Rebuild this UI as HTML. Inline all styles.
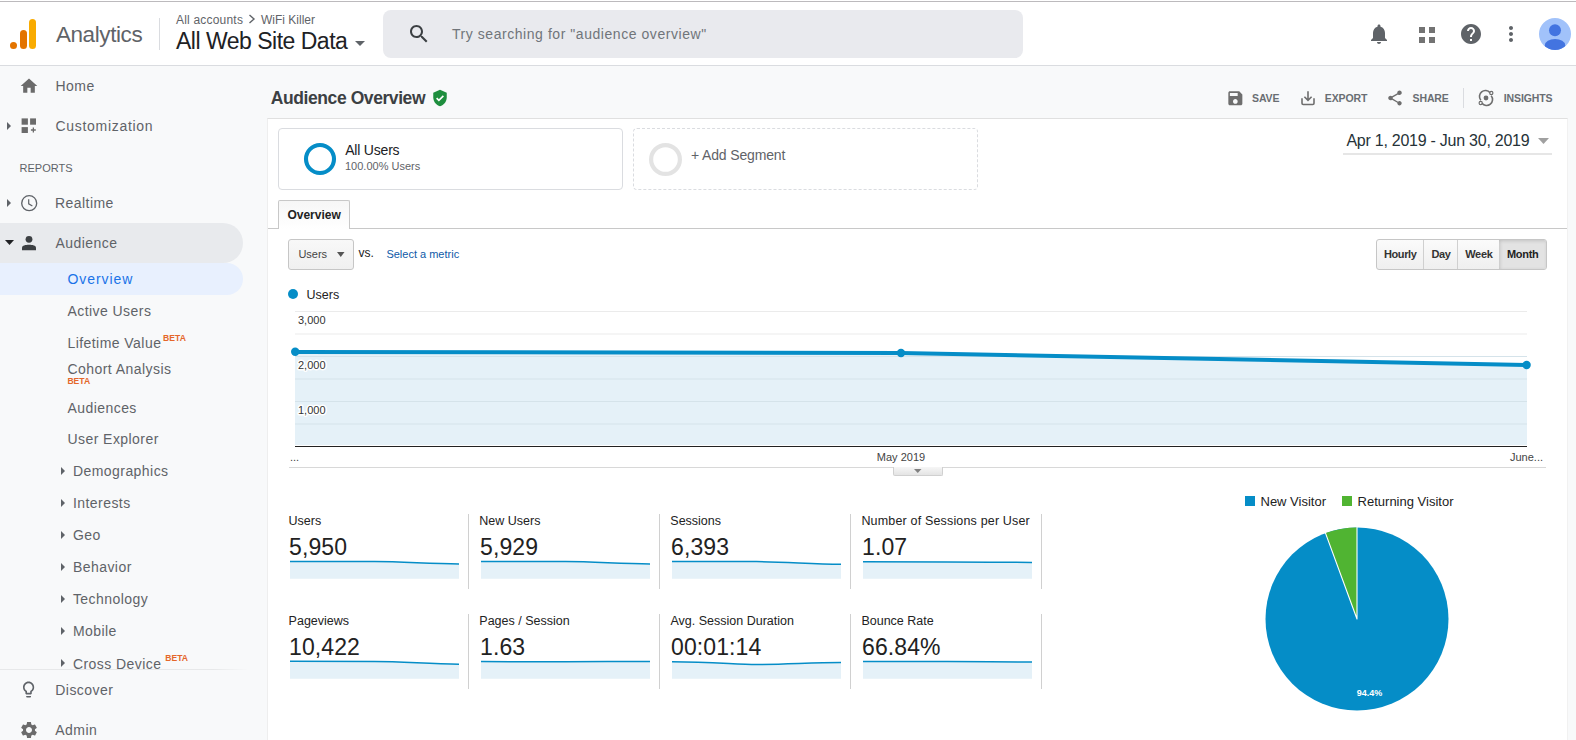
<!DOCTYPE html>
<html><head><meta charset="utf-8">
<style>
*{margin:0;padding:0;box-sizing:border-box}
html,body{width:1576px;height:740px;overflow:hidden;background:#f8f9fa;font-family:"Liberation Sans",sans-serif;position:relative}
.a{position:absolute}
.t{position:absolute;white-space:nowrap;line-height:1}
svg{position:absolute;overflow:visible}
.nav{font-size:14px;color:#5f6368;letter-spacing:.45px}
.ic{fill:#6b6b6b}
.beta{font-size:8.6px;font-weight:700;color:#e5672a;letter-spacing:0}
.tri-r{position:absolute;width:0;height:0;border-top:4px solid transparent;border-bottom:4px solid transparent;border-left:4.5px solid #5f6368}
.act{font-size:10.5px;font-weight:700;color:#6a6e73;letter-spacing:-.1px}
.lbl{font-size:12.5px;color:#222}
.val{font-size:23px;color:#222;letter-spacing:.1px}
.vdiv{position:absolute;width:1px;background:#d0d0d0}
</style></head><body>
<!-- HEADER -->
<div class="a" style="left:0;top:0;width:1576px;height:66px;background:#fff;border-bottom:1px solid #dadce0"></div>
<div class="a" style="left:0;top:1px;width:1576px;height:1px;background:#bcbabd"></div>
<!-- logo -->
<div class="a" style="left:10.3px;top:41.5px;width:7.1px;height:7.2px;border-radius:50%;background:#e37400"></div>
<div class="a" style="left:19.5px;top:30.2px;width:7.1px;height:18.5px;border-radius:3.55px;background:#e37400"></div>
<div class="a" style="left:28.8px;top:19.1px;width:7.0px;height:29.6px;border-radius:3.5px;background:#f9ab00"></div>
<div class="t" style="left:55.9px;top:23.8px;font-size:22.5px;color:#5f6368;letter-spacing:-.4px">Analytics</div>
<div class="a" style="left:159px;top:18px;width:1px;height:32px;background:#dadce0"></div>
<div class="t" style="left:176px;top:13.8px;font-size:12px;color:#5f6368;letter-spacing:.2px">All accounts</div>
<svg style="left:248px;top:14px" width="8" height="10" viewBox="0 0 8 10"><path d="M1.5 1 L6 5 L1.5 9" fill="none" stroke="#5f6368" stroke-width="1.4"/></svg>
<div class="t" style="left:261px;top:13.8px;font-size:12px;color:#5f6368">WiFi Killer</div>
<div class="t" style="left:176px;top:30.2px;font-size:23px;color:#202124;letter-spacing:-.5px">All Web Site Data</div>
<svg style="left:355px;top:40.5px" width="10" height="5" viewBox="0 0 10 5"><path d="M0 0 L10 0 L5 5z" fill="#5f6368"/></svg>
<!-- search -->
<div class="a" style="left:383px;top:10px;width:640px;height:48px;border-radius:8px;background:#e9eaee"></div>
<svg style="left:407px;top:21.9px" width="24" height="24" viewBox="0 0 24 24"><path fill="#3c4043" d="M15.5 14h-.79l-.28-.27C15.41 12.59 16 11.11 16 9.5 16 5.910 13.09 3 9.5 3S3 5.91 3 9.5 5.91 16 9.5 16c1.61 0 3.09-.59 4.23-1.57l.27.28v.79l5 4.99L20.49 19l-4.99-5zm-6 0C7.01 14 5 11.99 5 9.5S7.01 5 9.5 5 14 7.01 14 9.5 11.99 14 9.5 14z"/></svg>
<div class="t" style="left:452px;top:27px;font-size:14px;color:#70757a;letter-spacing:.55px">Try searching for "audience overview"</div>
<!-- right icons -->
<svg style="left:1366.7px;top:21.9px" width="24" height="24" viewBox="0 0 24 24"><path fill="#5f6368" d="M12 22c1.1 0 2-.9 2-2h-4c0 1.1.89 2 2 2zm6-6v-5c0-3.07-1.64-5.64-4.5-6.32V4c0-.83-.67-1.5-1.5-1.5s-1.5.67-1.5 1.5v.68C7.63 5.36 6 7.92 6 11v5l-2 2v1h16v-1l-2-2z"/></svg>
<div class="a" style="left:1419px;top:27px;width:6px;height:6px;background:#737373"></div>
<div class="a" style="left:1429px;top:27px;width:6px;height:6px;background:#737373"></div>
<div class="a" style="left:1419px;top:37px;width:6px;height:6px;background:#737373"></div>
<div class="a" style="left:1429px;top:37px;width:6px;height:6px;background:#737373"></div>
<svg style="left:1459px;top:22px" width="24" height="24" viewBox="0 0 24 24"><path fill="#5f6368" d="M12 2C6.48 2 2 6.48 2 12s4.48 10 10 10 10-4.48 10-10S17.52 2 12 2zm1 17h-2v-2h2v2zm2.07-7.75l-.9.92C13.45 12.9 13 13.5 13 15h-2v-.5c0-1.1.45-2.1 1.170-2.83l1.24-1.26c.37-.36.59-.86.59-1.41 0-1.1-.9-2-2-2s-2 .9-2 2H8c0-2.21 1.79-4 4-4s4 1.79 4 4c0 .88-.36 1.68-.93 2.25z"/></svg>
<svg style="left:1499px;top:22px" width="24" height="24" viewBox="0 0 24 24"><path fill="#5f6368" d="M12 8c1.1 0 2-.9 2-2s-.9-2-2-2-2 .9-2 2 .9 2 2 2zm0 2c-1.1 0-2 .9-2 2s.9 2 2 2 2-.9 2-2-.9-2-2-2zm0 6c-1.1 0-2 .9-2 2s.9 2 2 2 2-.9 2-2-.9-2-2-2z"/></svg>
<svg style="left:1539px;top:17.8px" width="32" height="32" viewBox="0 0 32 32"><defs><clipPath id="av"><circle cx="16" cy="16" r="16"/></clipPath></defs><circle cx="16" cy="16" r="16" fill="#a1c2fa"/><g clip-path="url(#av)"><circle cx="16" cy="12.2" r="6" fill="#4374e0"/><rect x="5.9" y="21" width="20.3" height="14" rx="10.15" ry="6.2" fill="#4374e0"/></g></svg>

<!-- SIDEBAR -->
<svg style="left:19px;top:76.1px" width="20" height="20" viewBox="0 0 24 24"><path fill="#6b6b6b" d="M10 20v-6h4v6h5v-8h3L12 3 2 12h3v8z"/></svg>
<div class="t nav" style="left:55.5px;top:78.8px">Home</div>
<div class="tri-r" style="left:7px;top:122px"></div>
<svg style="left:21px;top:118px" width="16" height="16" viewBox="0 0 16 16"><rect x="0.6" y="0.4" width="6.3" height="6.3" fill="#6b6b6b"/><rect x="9.1" y="0.4" width="5.9" height="6.3" fill="#6b6b6b"/><rect x="0.6" y="9.1" width="6.3" height="5.9" fill="#6b6b6b"/><path d="M12.35 9.6v5M9.9 12h4.9" stroke="#6b6b6b" stroke-width="1.3"/></svg>
<div class="t nav" style="left:55.5px;top:119.3px;letter-spacing:.7px">Customization</div>
<div class="t" style="left:19.4px;top:162.9px;font-size:11px;color:#5f6368;letter-spacing:.05px">REPORTS</div>
<div class="tri-r" style="left:7px;top:199px"></div>
<svg style="left:21px;top:194.8px" width="16.4" height="16.4" viewBox="0 0 16.4 16.4"><circle cx="8.2" cy="8.2" r="7.5" fill="none" stroke="#5f6368" stroke-width="1.35"/><path d="M7.7 4.2v4.6l3.7 2.2" fill="none" stroke="#5f6368" stroke-width="1.2"/></svg>
<div class="t nav" style="left:55px;top:196.3px">Realtime</div>
<div class="a" style="left:0;top:223px;width:243px;height:40px;background:#e8eaed;border-radius:0 20px 20px 0"></div>
<svg style="left:4.8px;top:240.4px" width="9" height="5" viewBox="0 0 9 5"><path d="M0 0h9L4.5 5z" fill="#202124"/></svg>
<svg style="left:0;top:0" width="60" height="260"><circle cx="29" cy="239.3" r="3.4" fill="#3c4043"/><path d="M22 250.3V247.8C22 245.6 25.5 244.8 29 244.8S36 245.6 36 247.8V250.3Z" fill="#3c4043"/></svg>
<div class="t nav" style="left:55.5px;top:236.1px">Audience</div>
<div class="a" style="left:0;top:263px;width:243px;height:32px;background:#e8f0fe;border-radius:0 16px 16px 0"></div>
<div class="t nav" style="left:67.4px;top:272.1px;color:#1a73e8;letter-spacing:.95px">Overview</div>
<div class="t nav" style="left:67.4px;top:303.9px">Active Users</div>
<div class="t nav" style="left:67.4px;top:335.5px">Lifetime Value</div>
<div class="t beta" style="left:163.1px;top:334.2px">BETA</div>
<div class="t nav" style="left:67.4px;top:361.7px">Cohort Analysis</div>
<div class="t beta" style="left:67.4px;top:377.2px">BETA</div>
<div class="t nav" style="left:67.4px;top:400.5px">Audiences</div>
<div class="t nav" style="left:67.4px;top:431.7px">User Explorer</div>
<div class="tri-r" style="left:60.7px;top:467px"></div>
<div class="t nav" style="left:72.9px;top:464.3px">Demographics</div>
<div class="tri-r" style="left:60.7px;top:499px"></div>
<div class="t nav" style="left:72.9px;top:495.9px">Interests</div>
<div class="tri-r" style="left:60.7px;top:531px"></div>
<div class="t nav" style="left:72.9px;top:527.8px">Geo</div>
<div class="tri-r" style="left:60.7px;top:563px"></div>
<div class="t nav" style="left:72.9px;top:559.9px">Behavior</div>
<div class="tri-r" style="left:60.7px;top:595px"></div>
<div class="t nav" style="left:72.9px;top:592.0px">Technology</div>
<div class="tri-r" style="left:60.7px;top:627px"></div>
<div class="t nav" style="left:72.9px;top:623.6px">Mobile</div>
<div class="tri-r" style="left:60.7px;top:659px"></div>
<div class="t nav" style="left:72.9px;top:656.5px">Cross Device</div>
<div class="t beta" style="left:165.3px;top:654.3px">BETA</div>
<div class="a" style="left:0;top:668.5px;width:267px;height:72px;background:#f8f9fa"></div>
<div class="a" style="left:0;top:668.5px;width:267px;height:1.5px;background:linear-gradient(to right,rgba(60,64,67,.09),rgba(60,64,67,.09) 80%,rgba(60,64,67,0) 93%)"></div>
<svg style="left:19.4px;top:680.2px" width="19.2" height="19.2" viewBox="0 0 24 24"><path fill="#5f6368" d="M9 21c0 .55.45 1 1 1h4c.55 0 1-.45 1-1v-1H9v1zm3-19C8.14 2 5 5.14 5 9c0 2.38 1.19 4.47 3 5.74V17c0 .55.45 1 1 1h6c.55 0 1-.45 1-1v-2.26c1.81-1.27 3-3.36 3-5.74 0-3.86-3.14-7-7-7zm2.85 11.1l-.85.6V16h-4v-2.3l-.85-.6C7.8 12.16 7 10.63 7 9c0-2.76 2.24-5 5-5s5 2.24 5 5c0 1.63-.8 3.16-2.15 4.1z"/></svg>
<div class="t nav" style="left:55.3px;top:683.3px">Discover</div>
<svg style="left:18.9px;top:720px" width="20" height="20" viewBox="0 0 24 24"><path fill="#6b6b6b" d="M19.14 12.94c.04-.3.06-.61.06-.94 0-.32-.02-.64-.07-.94l2.03-1.58c.18-.14.23-.41.12-.61l-1.92-3.32c-.12-.22-.37-.29-.59-.22l-2.39.96c-.5-.38-1.03-.7-1.62-.94l-.36-2.54c-.04-.24-.24-.41-.48-.41h-3.84c-.24 0-.43.17-.47.41l-.36 2.54c-.59.24-1.13.57-1.62.94l-2.39-.96c-.22-.08-.47 0-.59.22L2.74 8.87c-.12.21-.08.47.12.61l2.03 1.58c-.05.3-.09.63-.09.94s.02.64.07.94l-2.03 1.58c-.18.14-.23.41-.12.61l1.92 3.32c.12.22.37.29.59.22l2.39-.96c.5.38 1.03.7 1.62.94l.36 2.54c.05.24.24.41.48.41h3.84c.24 0 .44-.17.47-.41l.36-2.54c.59-.24 1.13-.56 1.62-.94l2.39.96c.22.08.47 0 .59-.22l1.92-3.32c.12-.22.07-.47-.12-.61l-2.01-1.58zM12 15.6c-1.98 0-3.6-1.62-3.6-3.6s1.62-3.6 3.6-3.6 3.6 1.62 3.6 3.6-1.62 3.6-3.6 3.6z"/></svg>
<div class="t nav" style="left:55.3px;top:723.1px">Admin</div>

<!-- MAIN -->
<div class="t" style="left:270.8px;top:90.3px;font-size:17.5px;font-weight:700;color:#3c4043;letter-spacing:-.42px">Audience Overview</div>
<svg style="left:431px;top:88.5px" width="18" height="18" viewBox="0 0 24 24"><path fill="#1e8e3e" d="M12 1L3 5v6c0 5.55 3.84 10.74 9 12 5.16-1.26 9-6.45 9-12V5l-9-4z"/><path d="M7.5 12.2l3 3 6-6" fill="none" stroke="#fff" stroke-width="2.2"/></svg>
<!-- actions -->
<svg style="left:1225.7px;top:88.7px" width="18.7" height="18.7" viewBox="0 0 24 24"><path fill="#6e6e6e" d="M17 3H5c-1.11 0-2 .9-2 2v14c0 1.1.89 2 2 2h14c1.1 0 2-.9 2-2V7l-4-4zm-5 16c-1.66 0-3-1.34-3-3s1.34-3 3-3 3 1.34 3 3-1.34 3-3 3zm3-10H5V5h10v4z"/></svg>
<div class="t act" style="left:1252px;top:92.8px">SAVE</div>
<svg style="left:1300px;top:90px" width="16" height="16" viewBox="0 0 16 16"><path d="M8 1.2v9M4.4 6.7L8 10.3l3.6-3.6M2 8.2v5.1q0 1.2 1.2 1.2h9.6q1.2 0 1.2-1.2V8.2" fill="none" stroke="#6e6e6e" stroke-width="1.6"/></svg>
<div class="t act" style="left:1324.8px;top:92.8px">EXPORT</div>
<svg style="left:1386px;top:89px" width="18" height="18" viewBox="0 0 24 24"><path fill="#6e6e6e" d="M18 16.08c-.76 0-1.44.3-1.96.77L8.91 12.7c.05-.23.09-.46.09-.7s-.04-.47-.09-.7l7.05-4.11c.54.5 1.25.81 2.04.81 1.66 0 3-1.34 3-3s-1.34-3-3-3-3 1.34-3 3c0 .24.04.47.09.7L8.04 9.81C7.5 9.31 6.79 9 6 9c-1.66 0-3 1.34-3 3s1.34 3 3 3c.79 0 1.5-.31 2.04-.81l7.12 4.16c-.05.21-.08.43-.08.65 0 1.61 1.31 2.92 2.92 2.92 1.61 0 2.92-1.31 2.92-2.92s-1.31-2.92-2.92-2.92z"/></svg>
<div class="t act" style="left:1412.5px;top:92.8px">SHARE</div>
<div class="a" style="left:1463px;top:88px;width:1px;height:20px;background:#dadce0"></div>
<svg style="left:1478px;top:90px" width="16" height="16" viewBox="0 0 16 16"><circle cx="8" cy="8" r="2.4" fill="#6e6e6e"/><path d="M13.2 5.8A5.8 5.8 0 0 1 4 13.3M2.8 10.2A5.8 5.8 0 0 1 12 2.7" fill="none" stroke="#6e6e6e" stroke-width="1.6"/><circle cx="13.3" cy="3" r="1.6" fill="none" stroke="#6e6e6e" stroke-width="1.2"/><circle cx="2.7" cy="13" r="1.6" fill="none" stroke="#6e6e6e" stroke-width="1.2"/></svg>
<div class="t act" style="left:1503.7px;top:92.8px">INSIGHTS</div>

<!-- panel -->
<div class="a" style="left:267px;top:118px;width:1301px;height:622px;background:#fff;border-top:1px solid #e0e0e0;border-left:1px solid #eeeeee;border-right:1px solid #f1f1f1"></div>
<!-- segments -->
<div class="a" style="left:278px;top:128px;width:345px;height:62px;border:1px solid #dadce0;border-radius:4px"></div>
<svg style="left:303px;top:142.7px" width="33" height="33" viewBox="0 0 33 33"><circle cx="17" cy="16" r="14" fill="none" stroke="#058dc7" stroke-width="4.1"/></svg>
<div class="t" style="left:345.2px;top:143.1px;font-size:14px;color:#202124;letter-spacing:-.2px">All Users</div>
<div class="t" style="left:345px;top:161px;font-size:11px;color:#5f6368">100.00% Users</div>
<div class="a" style="left:633px;top:128px;width:345px;height:62px;border:1px dashed #dadce0;border-radius:4px"></div>
<svg style="left:649.3px;top:142.5px" width="33" height="33" viewBox="0 0 33 33"><circle cx="16.5" cy="16.5" r="14.4" fill="none" stroke="#e3e3e3" stroke-width="4.2"/></svg>
<div class="t" style="left:691px;top:148.3px;font-size:14px;color:#5f6368;letter-spacing:-.15px">+ Add Segment</div>
<!-- date -->
<div class="t" style="left:1346.4px;top:133.3px;font-size:16px;color:#263238;letter-spacing:-.25px">Apr 1, 2019 - Jun 30, 2019</div>
<svg style="left:1538.3px;top:138px" width="11" height="6" viewBox="0 0 11 6"><path d="M0 0h11L5.5 6z" fill="#a0a0a0"/></svg>
<div class="a" style="left:1343px;top:153px;width:209px;height:2px;background:#e6e6e6"></div>
<!-- tab -->
<div class="a" style="left:268px;top:228px;width:1299px;height:1px;background:#c8c8c8"></div>
<div class="a" style="left:278px;top:200px;width:72px;height:29px;border:1px solid #c8c8c8;border-bottom:none;border-radius:2px 2px 0 0;background:linear-gradient(#f6f6f6,#fff)"></div>
<div class="t" style="left:287.4px;top:209px;font-size:12px;font-weight:700;color:#222">Overview</div>
<!-- chart controls -->
<div class="a" style="left:288px;top:239px;width:66px;height:31px;border:1px solid #c6c6c6;border-radius:3px;background:linear-gradient(#f8f8f8,#f0f0f0)"></div>
<div class="t" style="left:298.4px;top:248.5px;font-size:11px;color:#444">Users</div>
<svg style="left:336.8px;top:251.6px" width="7.5" height="5" viewBox="0 0 7.5 5"><path d="M0 0h7.5L3.75 5z" fill="#555"/></svg>
<div class="t" style="left:358.4px;top:247px;font-size:12px;color:#222">vs.</div>
<div class="t" style="left:386.4px;top:248.5px;font-size:11px;color:#0f5aa8">Select a metric</div>
<!-- hourly buttons -->
<div class="a" style="left:1376px;top:239px;width:171px;height:31px;border:1px solid #c6c6c6;border-radius:3px;background:linear-gradient(#fbfbfb,#efefef);overflow:hidden">
  <div class="a" style="left:122.4px;top:0;width:49px;height:31px;background:#e3e3e3;box-shadow:inset 0 0 4px rgba(0,0,0,.22)"></div>
  <div class="a" style="left:46.3px;top:0;width:1px;height:31px;background:#d0d0d0"></div>
  <div class="a" style="left:80px;top:0;width:1px;height:31px;background:#d0d0d0"></div>
</div>
<div class="t" style="left:1384px;top:248.6px;font-size:11px;font-weight:700;color:#333;letter-spacing:-.4px">Hourly</div>
<div class="t" style="left:1431.4px;top:248.6px;font-size:11px;font-weight:700;color:#333;letter-spacing:-.3px">Day</div>
<div class="t" style="left:1465.2px;top:248.6px;font-size:11px;font-weight:700;color:#333;letter-spacing:-.3px">Week</div>
<div class="t" style="left:1507px;top:248.6px;font-size:11px;font-weight:700;color:#222;letter-spacing:-.3px">Month</div>
<!-- legend -->
<div class="a" style="left:288px;top:289px;width:10px;height:10px;border-radius:50%;background:#058dc7"></div>
<div class="t" style="left:306.5px;top:288.8px;font-size:12.5px;color:#222">Users</div>
<!-- chart -->
<svg style="left:0;top:0" width="1576" height="740">
  <g stroke="#ebebeb" stroke-width="1">
    <line x1="295" y1="311.5" x2="1527" y2="311.5"/>
    <line x1="295" y1="334" x2="1527" y2="334"/>
  </g>
  <path d="M295 352 L901 353 L1526.6 365 L1527 365 L1527 445 L295 445z" fill="#e5f1f8"/>
  <g stroke="#d5e3ea" stroke-width="1">
    <line x1="295" y1="356.5" x2="1527" y2="356.5"/>
    <line x1="295" y1="379" x2="1527" y2="379"/>
    <line x1="295" y1="401.5" x2="1527" y2="401.5"/>
    <line x1="295" y1="424" x2="1527" y2="424"/>
  </g>
  <line x1="295" y1="446.5" x2="1527" y2="446.5" stroke="#222" stroke-width="1"/>
  <path d="M295 352 L901 353 L1526.6 365" fill="none" stroke="#058dc7" stroke-width="4" stroke-linejoin="round"/>
  <circle cx="295.2" cy="351.8" r="4.2" fill="#058dc7"/>
  <circle cx="901" cy="353" r="4.2" fill="#058dc7"/>
  <circle cx="1526.6" cy="365" r="4.2" fill="#058dc7"/>
  <g font-family="Liberation Sans" font-size="11" fill="#333" stroke="#fff" stroke-width="3" paint-order="stroke" stroke-linejoin="round">
    <text x="298" y="324">3,000</text>
    <text x="298" y="369">2,000</text>
    <text x="298" y="414">1,000</text>
  </g>
  <g font-family="Liberation Sans" font-size="11" fill="#444">
    <text x="290" y="461">...</text>
    <text x="901" y="461.3" text-anchor="middle">May 2019</text>
    <text x="1543" y="461.3" text-anchor="end">June...</text>
  </g>
  <line x1="289" y1="467.5" x2="1546" y2="467.5" stroke="#d8d8d8" stroke-width="1"/>
</svg>
<div class="a" style="left:893px;top:467px;width:50px;height:9px;border:1px solid #d0d0d0;border-top:none;border-radius:0 0 2px 2px;background:linear-gradient(#f6f6f6,#e4e4e4)"></div>
<svg style="left:914.3px;top:468.8px" width="7.5" height="4" viewBox="0 0 7.5 4"><path d="M0 0h7.5L3.75 4z" fill="#808080"/></svg>

<!-- stats -->
<div class="t lbl" style="left:288.6px;top:515px">Users</div>
<div class="t val" style="left:289px;top:536.1px">5,950</div>
<div class="t lbl" style="left:479.3px;top:515px">New Users</div>
<div class="t val" style="left:480px;top:536.1px">5,929</div>
<div class="t lbl" style="left:670.3px;top:515px">Sessions</div>
<div class="t val" style="left:671px;top:536.1px">6,393</div>
<div class="t lbl" style="left:861.4px;top:515px;letter-spacing:.17px">Number of Sessions per User</div>
<div class="t val" style="left:862px;top:536.1px">1.07</div>
<div class="t lbl" style="left:288.6px;top:615.2px">Pageviews</div>
<div class="t val" style="left:289px;top:636.1px">10,422</div>
<div class="t lbl" style="left:479.3px;top:615.2px">Pages / Session</div>
<div class="t val" style="left:480px;top:636.1px">1.63</div>
<div class="t lbl" style="left:670.5px;top:615.2px">Avg. Session Duration</div>
<div class="t val" style="left:671px;top:636.1px">00:01:14</div>
<div class="t lbl" style="left:861.4px;top:615.2px">Bounce Rate</div>
<div class="t val" style="left:862px;top:636.1px">66.84%</div>
<div class="vdiv" style="left:468px;top:514px;height:75px"></div>
<div class="vdiv" style="left:659px;top:514px;height:75px"></div>
<div class="vdiv" style="left:850px;top:514px;height:75px"></div>
<div class="vdiv" style="left:1041px;top:514px;height:75px"></div>
<div class="vdiv" style="left:468px;top:614px;height:75px"></div>
<div class="vdiv" style="left:659px;top:614px;height:75px"></div>
<div class="vdiv" style="left:850px;top:614px;height:75px"></div>
<div class="vdiv" style="left:1041px;top:614px;height:75px"></div>
<svg style="left:0;top:0" width="1576" height="740">
  <g fill="#e5f1f8">
    <path d="M290 561.6 C330 561.6 354.5 561.6 374.5 561.6 C404.5 561.6 429 563.9 459 563.9 L459 578.8 L290 578.8z"/>
    <path d="M481 561.6 C521 561.6 545.5 561.6 565.5 561.6 C595.5 561.6 620 563.9 650 563.9 L650 578.8 L481 578.8z"/>
    <path d="M672 561.5 C712 561.5 736.5 561.6 756.5 561.6 C786.5 561.6 811 564.3 841 564.3 L841 578.8 L672 578.8z"/>
    <path d="M863 561.8 C903 561.8 927.5 561.9 947.5 561.9 C977.5 561.9 1002 562.4 1032 562.4 L1032 578.8 L863 578.8z"/>
    <path d="M290 661.3 C330 661.3 354.5 661.4 374.5 661.4 C404.5 661.4 429 664.2 459 664.2 L459 678.8 L290 678.8z"/>
    <path d="M481 661.6 C521 661.6 545.5 661.7 565.5 661.7 C595.5 661.7 620 661.5 650 661.5 L650 678.8 L481 678.8z"/>
    <path d="M672 661.7 C712 661.7 736.5 664.5 756.5 664.5 C786.5 664.5 811 662.5 841 662.5 L841 678.8 L672 678.8z"/>
    <path d="M863 661.4 C903 661.4 927.5 661.5 947.5 661.5 C977.5 661.5 1002 662 1032 662 L1032 678.8 L863 678.8z"/>
  </g>
  <g fill="none" stroke="#058dc7" stroke-width="1.5" stroke-linejoin="round">
    <path d="M290 561.6 C330 561.6 354.5 561.6 374.5 561.6 C404.5 561.6 429 563.9 459 563.9"/>
    <path d="M481 561.6 C521 561.6 545.5 561.6 565.5 561.6 C595.5 561.6 620 563.9 650 563.9"/>
    <path d="M672 561.5 C712 561.5 736.5 561.6 756.5 561.6 C786.5 561.6 811 564.3 841 564.3"/>
    <path d="M863 561.8 C903 561.8 927.5 561.9 947.5 561.9 C977.5 561.9 1002 562.4 1032 562.4"/>
    <path d="M290 661.3 C330 661.3 354.5 661.4 374.5 661.4 C404.5 661.4 429 664.2 459 664.2"/>
    <path d="M481 661.6 C521 661.6 545.5 661.7 565.5 661.7 C595.5 661.7 620 661.5 650 661.5"/>
    <path d="M672 661.7 C712 661.7 736.5 664.5 756.5 664.5 C786.5 664.5 811 662.5 841 662.5"/>
    <path d="M863 661.4 C903 661.4 927.5 661.5 947.5 661.5 C977.5 661.5 1002 662 1032 662"/>
  </g>
</svg>

<!-- pie -->
<div class="a" style="left:1245px;top:496px;width:10px;height:10px;background:#058dc7"></div>
<div class="t" style="left:1260.5px;top:494.7px;font-size:13px;color:#222">New Visitor</div>
<div class="a" style="left:1342px;top:496px;width:10px;height:10px;background:#50b432"></div>
<div class="t" style="left:1357.6px;top:494.7px;font-size:13px;color:#222">Returning Visitor</div>
<svg style="left:0;top:0" width="1576" height="740">
  <circle cx="1357" cy="619" r="91.5" fill="#058dc7"/>
  <path d="M1357 619 L1357 527.5 A91.5 91.5 0 0 0 1325.5 533.1 Z" fill="#50b432"/>
  <path d="M1357 527 L1357 619 L1325.3 532.6" fill="none" stroke="#fff" stroke-width="1.1" stroke-linejoin="round"/>
  <text x="1369.5" y="695.5" text-anchor="middle" font-family="Liberation Sans" font-size="9" font-weight="700" fill="#fff">94.4%</text>
</svg>
</body></html>
